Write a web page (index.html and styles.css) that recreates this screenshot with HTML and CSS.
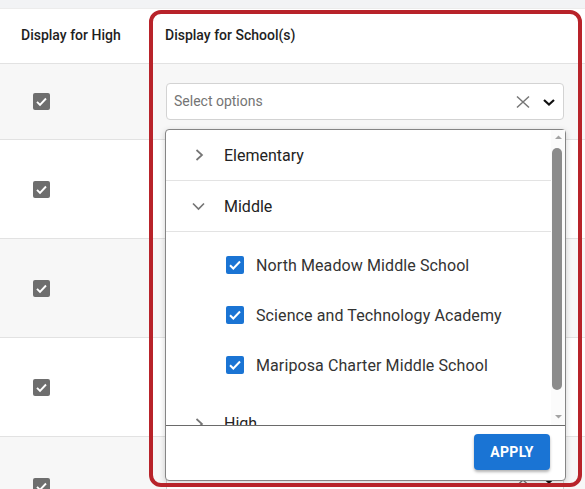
FILE: index.html
```html
<!DOCTYPE html>
<html>
<head>
<meta charset="utf-8">
<link rel="stylesheet" href="styles.css">
</head>
<body>
<div class="page">
  <div class="table">
    <div class="row head">
      <div class="cell c1">Display for High</div>
      <div class="cell c2">Display for School(s)</div>
    </div>

    <div class="row first alt">
      <div class="cell c1"><span class="gcheck"><svg viewBox="0 0 17 17" width="17" height="17"><path d="M4 8.8l3 3 6-6.3" fill="none" stroke="#fff" stroke-width="1.9"/></svg></span></div>
      <div class="cell c2 selcell">
        <div class="select">
          <span class="ph">Select options</span>
          <span class="icons">
            <svg class="ic" viewBox="0 0 20 20" width="20" height="20"><path d="M4 4.5l12 11M16 4.5l-12 11" stroke="#777" stroke-width="1.5" fill="none"/></svg>
            <svg class="ic" viewBox="0 0 20 20" width="20" height="20"><path d="M5 8l5 4.5 5-4.5" stroke="#111" stroke-width="2.2" fill="none"/></svg>
          </span>
        </div>
        <div class="dropdown">
          <div class="listwrap">
            <div class="list">
              <div class="group">
                <svg class="chev" viewBox="0 0 24 24" width="24" height="24"><path d="M8.5 7l5.5 5-5.5 5" stroke="#757575" stroke-width="1.7" fill="none"/></svg>
                <span>Elementary</span>
              </div>
              <div class="group">
                <svg class="chev" viewBox="0 0 24 24" width="24" height="24"><path d="M5 9.5l5.5 5.5 5.5-5.5" stroke="#757575" stroke-width="1.7" fill="none"/></svg>
                <span>Middle</span>
              </div>
              <div class="children">
                <div class="item"><span class="bcheck"><svg viewBox="0 0 18 18" width="18" height="18"><path d="M4 9.2l3.3 3.3 6.7-7" fill="none" stroke="#fff" stroke-width="2"/></svg></span><span>North Meadow Middle School</span></div>
                <div class="item"><span class="bcheck"><svg viewBox="0 0 18 18" width="18" height="18"><path d="M4 9.2l3.3 3.3 6.7-7" fill="none" stroke="#fff" stroke-width="2"/></svg></span><span>Science and Technology Academy</span></div>
                <div class="item"><span class="bcheck"><svg viewBox="0 0 18 18" width="18" height="18"><path d="M4 9.2l3.3 3.3 6.7-7" fill="none" stroke="#fff" stroke-width="2"/></svg></span><span>Mariposa Charter Middle School</span></div>
              </div>
              <div class="group last">
                <svg class="chev" viewBox="0 0 24 24" width="24" height="24"><path d="M8.5 7l5.5 5-5.5 5" stroke="#757575" stroke-width="1.7" fill="none"/></svg>
                <span>High</span>
              </div>
            </div>
            <div class="scrollbar">
              <svg class="arrow" viewBox="0 0 13 8" width="13" height="8"><path d="M3 6h7L6.5 2.5z" fill="#a3a3a3"/></svg>
              <div class="track"><div class="thumb"></div></div>
              <svg class="arrow" viewBox="0 0 13 8" width="13" height="8"><path d="M3 2h7L6.5 5.5z" fill="#a3a3a3"/></svg>
            </div>
          </div>
          <div class="footer">
            <button class="apply">APPLY</button>
          </div>
        </div>
      </div>
    </div>

    <div class="row">
      <div class="cell c1"><span class="gcheck"><svg viewBox="0 0 17 17" width="17" height="17"><path d="M4 8.8l3 3 6-6.3" fill="none" stroke="#fff" stroke-width="1.9"/></svg></span></div>
      <div class="cell c2"></div>
    </div>
    <div class="row alt">
      <div class="cell c1"><span class="gcheck"><svg viewBox="0 0 17 17" width="17" height="17"><path d="M4 8.8l3 3 6-6.3" fill="none" stroke="#fff" stroke-width="1.9"/></svg></span></div>
      <div class="cell c2"></div>
    </div>
    <div class="row">
      <div class="cell c1"><span class="gcheck"><svg viewBox="0 0 17 17" width="17" height="17"><path d="M4 8.8l3 3 6-6.3" fill="none" stroke="#fff" stroke-width="1.9"/></svg></span></div>
      <div class="cell c2"></div>
    </div>
    <div class="row alt">
      <div class="cell c1"><span class="gcheck"><svg viewBox="0 0 17 17" width="17" height="17"><path d="M4 8.8l3 3 6-6.3" fill="none" stroke="#fff" stroke-width="1.9"/></svg></span></div>
      <div class="cell c2 selcell low">
        <div class="select">
          <span class="ph"></span>
          <span class="icons">
            <svg class="ic" viewBox="0 0 20 20" width="20" height="20"><path d="M4 4.5l12 11M16 4.5l-12 11" stroke="#777" stroke-width="1.5" fill="none"/></svg>
            <svg class="ic" viewBox="0 0 20 20" width="20" height="20"><path d="M5 8l5 4.5 5-4.5" stroke="#111" stroke-width="2.2" fill="none"/></svg>
          </span>
        </div>
      </div>
    </div>
  </div>
  <div class="highlight"></div>
</div>
</body>
</html>
```
FILE: styles.css
```css
* { box-sizing: border-box; }
html, body { margin: 0; padding: 0; }
body {
  font-family: Roboto, "Noto Sans", "Liberation Sans", sans-serif;
  background: #f2f3f5;
  width: 585px;
  height: 489px;
  overflow: hidden;
}
.page {
  position: relative;
  padding-top: 8px;
  height: 489px;
  overflow: hidden;
}
.table {
  background: #fff;
  border-top: 1px solid #ececec;
}
.row {
  display: grid;
  grid-template-columns: 150px 1fr;
  border-bottom: 1px solid #e2e2e2;
  height: 99px;
}
.row.alt { background: #f7f7f7; }
.row.head {
  height: 55px;
  background: #fff;
  font-size: 14px;
  font-weight: 500;
  color: #1f1f1f;
}
.row.head .cell {
  display: flex;
  align-items: center;
  padding-bottom: 2px;
}
.row.head .c1 { padding-left: 21px; }
.row.head .c2 { padding-left: 15px; }
.row.first { height: 76px; }
.cell.c1 {
  display: flex;
  align-items: center;
  padding-left: 33px;
}
.gcheck {
  width: 17px;
  height: 17px;
  background: #6e6e6e;
  border-radius: 2px;
  display: flex;
}
.selcell {
  position: relative;
  padding: 19px 21px 0 16px;
}
.selcell.low { padding-top: 24px; }
.select {
  height: 37px;
  border: 1px solid #d3d3d3;
  border-radius: 4px;
  background: #fff;
  display: flex;
  align-items: center;
  justify-content: space-between;
  padding: 0 4px 0 7px;
}
.ph {
  font-size: 14px;
  color: #747474;
  padding-bottom: 2px;
}
.icons {
  display: flex;
  gap: 6px;
  align-items: center;
}
.ic { display: block; }
.dropdown {
  position: absolute;
  z-index: 2;
  top: 65px;
  left: 15px;
  width: 401px;
  height: 352px;
  background: #fff;
  border: 1px solid #858585;
  border-radius: 4px;
  box-shadow: 0 2px 6px rgba(0,0,0,0.18);
  display: flex;
  flex-direction: column;
}
.listwrap {
  height: 296px;
  display: flex;
  border-bottom: 1px solid #6a6a6a;
}
.list {
  flex: 1;
  overflow: hidden;
  color: #232323;
  font-size: 16px;
}
.group {
  height: 51px;
  border-bottom: 1px solid #e3e3e3;
  display: flex;
  align-items: center;
  gap: 12px;
  padding-left: 22px;
}
.group.last { border-bottom: none; }
.chev { display: block; flex: none; }
.children { padding: 8px 0; }
.item {
  height: 50px;
  display: flex;
  align-items: center;
  gap: 12px;
  padding-left: 60px;
  color: #333;
  letter-spacing: 0.1px;
}
.bcheck {
  width: 18px;
  height: 18px;
  background: #1a74d4;
  border-radius: 2px;
  display: flex;
  flex: none;
}
.scrollbar {
  width: 14px;
  background: #fbfbfb;
  display: flex;
  flex-direction: column;
  align-items: center;
  padding: 3px 0 4px;
}
.arrow { display: block; }
.track {
  flex: 1;
  width: 100%;
  padding: 7px 2px 0 1px;
}
.thumb {
  height: 242px;
  width: 10px;
  background: #8b8b8b;
  border-radius: 5px;
}
.footer {
  flex: 1;
  display: flex;
  justify-content: flex-end;
  align-items: flex-start;
  padding: 8px 15px 0 0;
}
.apply {
  width: 76px;
  height: 36px;
  border: none;
  border-radius: 4px;
  background: #1a74d4;
  color: #fff;
  font-family: Roboto, "Liberation Sans", sans-serif;
  font-size: 14px;
  font-weight: 700;
  letter-spacing: 0.3px;
  box-shadow: 0 2px 3px rgba(0,0,0,0.3);
}
.highlight {
  position: absolute;
  left: 149px;
  top: 10px;
  width: 433px;
  height: 477px;
  border: 4px solid #b8232a;
  border-radius: 12px;
  pointer-events: none;
  z-index: 3;
}
```
